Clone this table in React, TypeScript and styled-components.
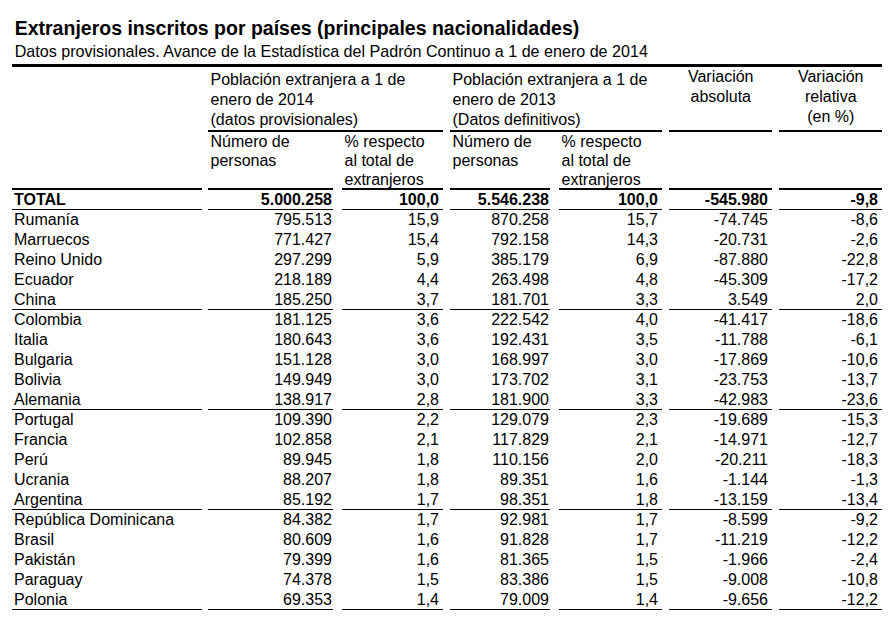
import React from "react";
import styled, { createGlobalStyle } from "styled-components";

const GlobalStyle = createGlobalStyle`
  html, body {
    margin: 0;
    padding: 0;
    background: #ffffff;
  }
  body {
    font-family: "Liberation Sans", Arial, sans-serif;
    color: #000000;
  }
`;

const Page = styled.div`
  padding: 16px 13px 0 12px;
  width: 870px;
`;

const Title = styled.h1`
  margin: 0 0 1px;
  padding-left: 2.7px;
  font-size: 19.5px;
  line-height: 24px;
  font-weight: 700;
  white-space: nowrap;
`;

const Subtitle = styled.p`
  margin: 0 0 3px;
  padding-left: 2.7px;
  font-size: 16.1px;
  line-height: 20px;
  white-space: nowrap;
`;

const Table = styled.div`
  display: grid;
  grid-template-columns: 190px 6px 125px 9px 101px 7px 100px 9px 103px 7px 103px 7px 103px;
  border-top: 3px solid #000;
  font-size: 16px;
  white-space: nowrap;
`;

const track = (c: number) => 2 * c + 1;

type Pos = { $col: number; $span?: number };

const placed = (p: Pos) =>
  `grid-column: ${track(p.$col)} / span ${2 * (p.$span ?? 1) - 1};`;

const GroupHead = styled.div<Pos & { $center?: boolean; $lift?: boolean; $rule?: boolean }>`
  ${(p) => placed(p)}
  padding: ${(p) => (p.$lift ? "0" : "3px")} 2px 0 2.5px;
  line-height: 20px;
  text-align: ${(p) => (p.$center ? "center" : "left")};
  border-bottom: ${(p) => (p.$rule ? "2px solid #000" : "2px solid transparent")};
`;

const SubHead = styled.div<Pos>`
  ${(p) => placed(p)}
  height: 56px;
  padding-left: 2.5px;
  line-height: 19px;
  border-bottom: 2px solid #000;
`;

const Cell = styled.div<Pos & { $num?: boolean; $tight?: boolean; $bold?: boolean; $rule?: boolean }>`
  ${(p) => placed(p)}
  box-sizing: border-box;
  height: 20px;
  line-height: 20px;
  font-weight: ${(p) => (p.$bold ? 700 : 400)};
  text-align: ${(p) => (p.$num ? "right" : "left")};
  padding: ${(p) => (p.$num ? (p.$tight ? "0 1px 0 0" : "0 4px 0 0") : "0 0 0 2px")};
  border-bottom: ${(p) => (p.$rule ? "1px solid #000" : "none")};
`;

const total = ["TOTAL", "5.000.258", "100,0", "5.546.238", "100,0", "-545.980", "-9,8"];

const rows: string[][] = [
  ["Rumanía", "795.513", "15,9", "870.258", "15,7", "-74.745", "-8,6"],
  ["Marruecos", "771.427", "15,4", "792.158", "14,3", "-20.731", "-2,6"],
  ["Reino Unido", "297.299", "5,9", "385.179", "6,9", "-87.880", "-22,8"],
  ["Ecuador", "218.189", "4,4", "263.498", "4,8", "-45.309", "-17,2"],
  ["China", "185.250", "3,7", "181.701", "3,3", "3.549", "2,0"],
  ["Colombia", "181.125", "3,6", "222.542", "4,0", "-41.417", "-18,6"],
  ["Italia", "180.643", "3,6", "192.431", "3,5", "-11.788", "-6,1"],
  ["Bulgaria", "151.128", "3,0", "168.997", "3,0", "-17.869", "-10,6"],
  ["Bolivia", "149.949", "3,0", "173.702", "3,1", "-23.753", "-13,7"],
  ["Alemania", "138.917", "2,8", "181.900", "3,3", "-42.983", "-23,6"],
  ["Portugal", "109.390", "2,2", "129.079", "2,3", "-19.689", "-15,3"],
  ["Francia", "102.858", "2,1", "117.829", "2,1", "-14.971", "-12,7"],
  ["Perú", "89.945", "1,8", "110.156", "2,0", "-20.211", "-18,3"],
  ["Ucrania", "88.207", "1,8", "89.351", "1,6", "-1.144", "-1,3"],
  ["Argentina", "85.192", "1,7", "98.351", "1,8", "-13.159", "-13,4"],
  ["República Dominicana", "84.382", "1,7", "92.981", "1,7", "-8.599", "-9,2"],
  ["Brasil", "80.609", "1,6", "91.828", "1,7", "-11.219", "-12,2"],
  ["Pakistán", "79.399", "1,6", "81.365", "1,5", "-1.966", "-2,4"],
  ["Paraguay", "74.378", "1,5", "83.386", "1,5", "-9.008", "-10,8"],
  ["Polonia", "69.353", "1,4", "79.009", "1,4", "-9.656", "-12,2"],
];

const renderRow = (row: string[], key: string, bold: boolean, rule: boolean) =>
  row.map((v, c) => (
    <Cell
      key={`${key}-${c}`}
      $col={c}
      $num={c > 0}
      $tight={c === 1 || c === 3}
      $bold={bold}
      $rule={rule}
    >
      {v}
    </Cell>
  ));

export default function App() {
  return (
    <>
      <GlobalStyle />
      <Page>
        <Title>Extranjeros inscritos por países (principales nacionalidades)</Title>
        <Subtitle>
          Datos provisionales. Avance de la Estadística del Padrón Continuo a 1 de enero de 2014
        </Subtitle>
        <Table>
          <GroupHead $col={0} />
          <GroupHead $col={1} $span={2} $rule>
            Población extranjera a 1 de
            <br />
            enero de 2014
            <br />
            (datos provisionales)
          </GroupHead>
          <GroupHead $col={3} $span={2} $rule>
            Población extranjera a 1 de
            <br />
            enero de 2013
            <br />
            (Datos definitivos)
          </GroupHead>
          <GroupHead $col={5} $center $lift $rule>
            Variación
            <br />
            absoluta
          </GroupHead>
          <GroupHead $col={6} $center $lift $rule>
            Variación
            <br />
            relativa
            <br />
            (en %)
          </GroupHead>

          <SubHead $col={0} />
          <SubHead $col={1}>
            Número de
            <br />
            personas
          </SubHead>
          <SubHead $col={2}>
            % respecto
            <br />
            al total de
            <br />
            extranjeros
          </SubHead>
          <SubHead $col={3}>
            Número de
            <br />
            personas
          </SubHead>
          <SubHead $col={4}>
            % respecto
            <br />
            al total de
            <br />
            extranjeros
          </SubHead>
          <SubHead $col={5} />
          <SubHead $col={6} />

          {renderRow(total, "total", true, true)}
          {rows.map((r, i) => renderRow(r, `r${i}`, false, i % 5 === 4))}
        </Table>
      </Page>
    </>
  );
}
